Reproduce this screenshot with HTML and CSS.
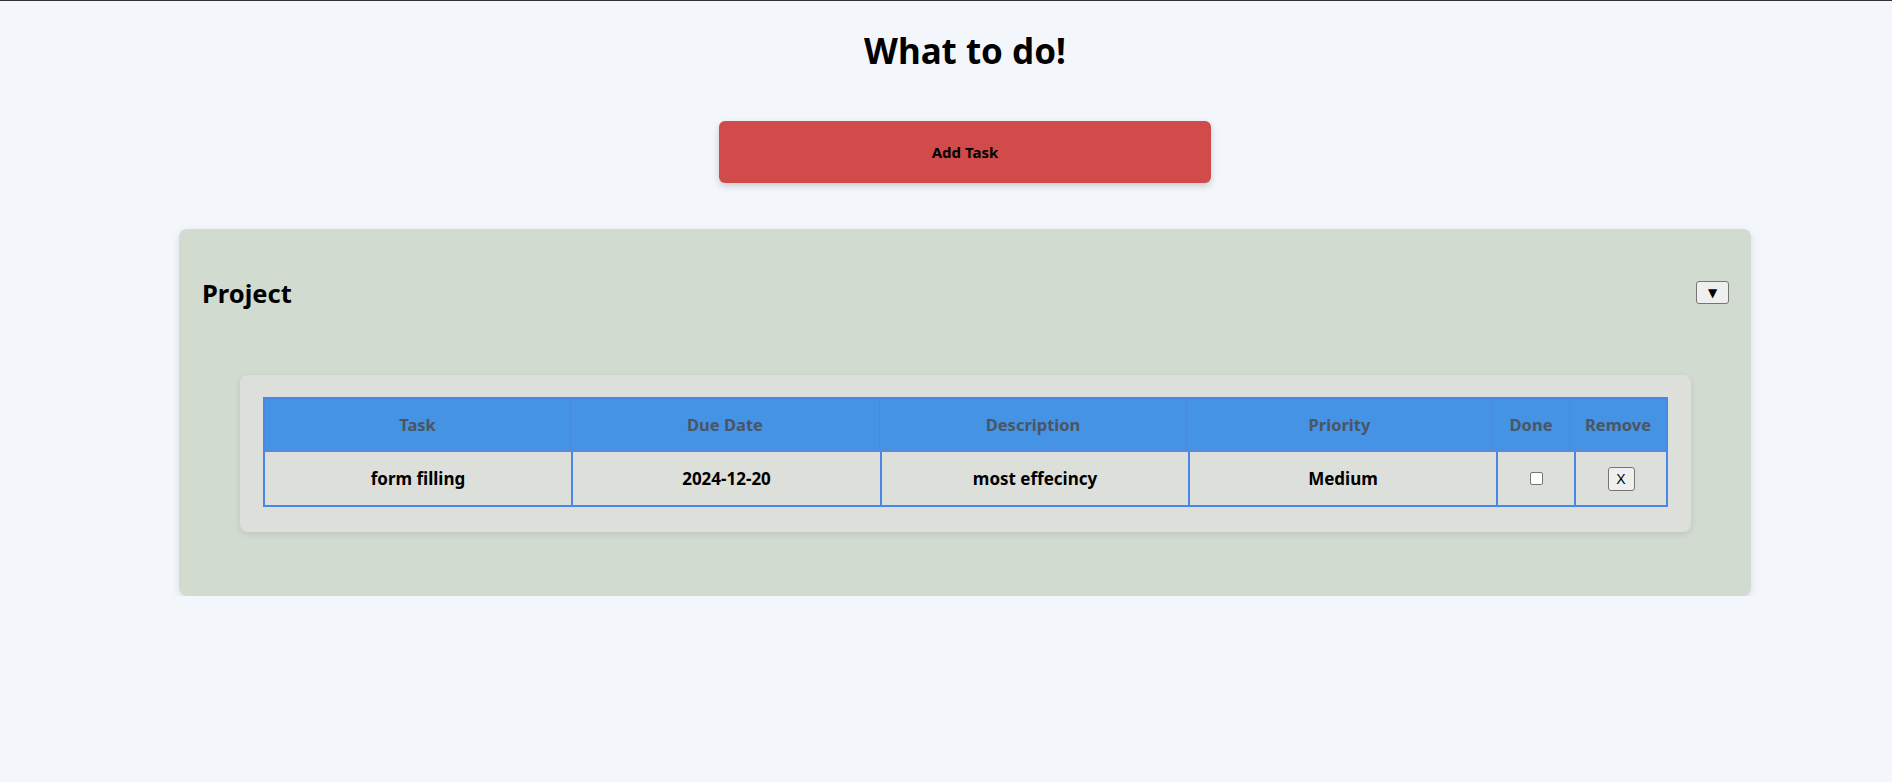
FILE: index.html
```html
<!DOCTYPE html>
<html lang="en">
<head>
<meta charset="utf-8">
<title>What to do!</title>
<link rel="stylesheet" href="styles.css">
</head>
<body>
<main class="page">
  <h1 class="title">What to do!</h1>
  <div class="actions">
    <button class="add-btn" type="button">Add Task</button>
  </div>
  <section class="project">
    <div class="project-head">
      <h2 class="project-name">Project</h2>
      <button class="toggle" type="button">▼</button>
    </div>
    <div class="task-card">
      <div class="task-table">
        <div class="trow thead">
          <div class="cell">Task</div>
          <div class="cell">Due Date</div>
          <div class="cell">Description</div>
          <div class="cell">Priority</div>
          <div class="cell">Done</div>
          <div class="cell">Remove</div>
        </div>
        <div class="trow tbody">
          <div class="cell">form filling</div>
          <div class="cell">2024-12-20</div>
          <div class="cell">most effecincy</div>
          <div class="cell">Medium</div>
          <div class="cell"><span class="check"></span></div>
          <div class="cell"><button class="remove" type="button">X</button></div>
        </div>
      </div>
    </div>
  </section>
</main>
</body>
</html>
```
FILE: styles.css
```css
* { box-sizing: border-box; }

html, body {
  margin: 0;
  padding: 0;
  background: #f3f7fc;
}

body {
  border-top: 1px solid #333;
  font-family: "Noto Sans", "Open Sans", sans-serif;
  color: #000;
}

.page {
  padding-left: 38px;
  display: flex;
  flex-direction: column;
}

.title {
  margin: 28px 0 0;
  font-size: 35px;
  line-height: 44px;
  font-weight: 700;
  text-align: center;
}

.actions {
  display: flex;
  justify-content: center;
  margin-top: 48px;
}

.add-btn {
  width: 492px;
  height: 62px;
  border: none;
  border-radius: 6px;
  background: #d14b4b;
  color: #000;
  font-family: "Noto Sans", sans-serif;
  font-weight: 700;
  font-size: 15px;
  box-shadow: 0 3px 7px rgba(0, 0, 0, 0.18);
}

.project {
  margin: 46px 141px 0;
  background: #d2dbd0;
  border-radius: 8px;
  padding: 20px 22px 21px 20px;
  box-shadow: 0 3px 8px rgba(0, 0, 0, 0.1);
}

.project-head {
  height: 90px;
  display: flex;
  align-items: center;
  justify-content: space-between;
}

.project-name {
  margin: 0 0 0 3px;
  font-size: 25.5px;
  font-weight: 700;
  line-height: 1;
}

.toggle {
  width: 33px;
  height: 23px;
  margin-top: -3px;
  padding: 0;
  border: 1px solid #767676;
  border-radius: 3px;
  background: #efefef;
  font-size: 12px;
  line-height: 1;
  color: #000;
  font-family: "DejaVu Sans", sans-serif;
}

.task-card {
  margin: 36px 38px 43px 41px;
  background: #dcdfda;
  border-radius: 8px;
  padding: 22px 23px 25px;
  box-shadow: 0 2px 6px rgba(0, 0, 0, 0.1);
}

.task-table {
  border: 2px solid #4a86e8;
}

.trow {
  display: grid;
}

.thead {
  grid-template-columns: 306px 309px 307px 306px 77px 1fr;
  background: #4493e4;
  border-bottom: 2px solid #5a89de;
  height: 53px;
}

.thead .cell {
  border-right: 1px solid #4c88dc;
  color: #4b5563;
}

.tbody {
  grid-template-columns: 308px 309px 308px 308px 78px 1fr;
  height: 53px;
}

.tbody .cell {
  border-right: 2px solid #4a86e8;
  color: #000;
}

.trow .cell:last-child {
  border-right: none;
}

.cell {
  display: flex;
  align-items: center;
  justify-content: center;
  font-size: 17px;
  font-weight: 700;
}

.thead .cell {
  font-size: 16.5px;
}

.check {
  width: 13px;
  height: 13px;
  border: 1px solid #767676;
  border-radius: 2px;
  background: #fff;
}

.remove {
  width: 27px;
  height: 24px;
  padding: 0;
  border: 1px solid #767676;
  border-radius: 3px;
  background: #efefef;
  font-family: "Liberation Sans", Arial, sans-serif;
  font-size: 14px;
  color: #000;
}
```
